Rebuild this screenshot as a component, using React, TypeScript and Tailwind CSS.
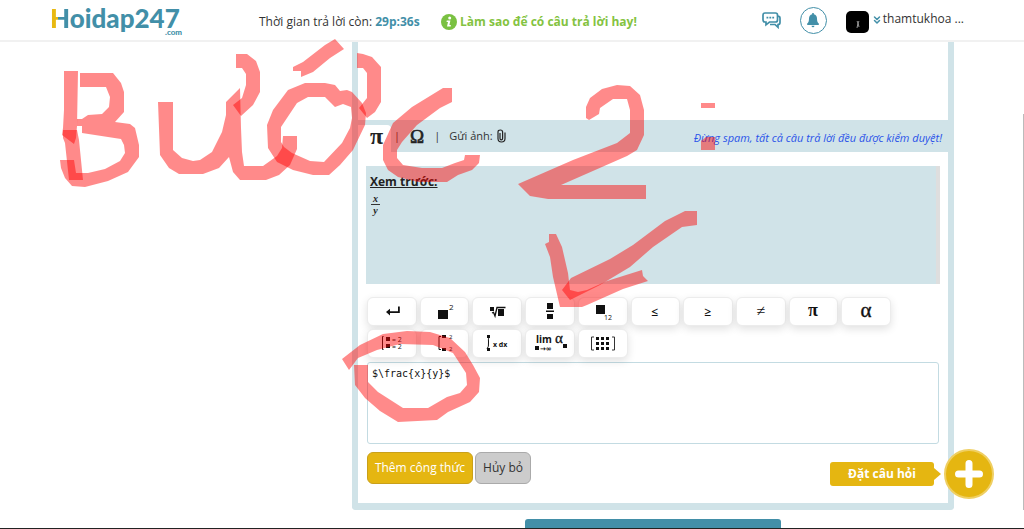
import type { ReactNode } from "react";
import { ChevronsDown } from "lucide-react";

const strokes = [
  "64,71 78,71 77,126 76,138 74,144 62,135 63,128 64,110",
  "63,130 77,130 79,140 83,180 69,180 65,143 63,138",
  "80,73 113,73 121,83 124,92 124,112 115,122 130,124 135,128 139,145 139,157 128,172 108,181 85,187 72,186 65,178 61,168 60,160 74,160 76,173 88,173 105,169 120,161 125,153 124,145 121,139 82,133 82,126 77,126 77,119 82,119 88,115 102,114 109,107 110,97 106,87 80,87",
  "158,102 173,102 173,150 182,158 193,161 200,160 212,152 222,132 226,115 226,102 240,88 241,128 242,152 244,166 263,166 277,156 282,148 283,136 297,136 297,149 290,165 279,175 266,180 240,180 233,172 229,157 219,168 203,174 179,174 169,168 160,155",
  "236,54 247,54 256,61 260,72 260,92 253,105 241,116 233,105 242,98 246,85 246,74 242,68 236,68",
  "293,67 303,62 325,45 335,39 344,49 330,58 313,72 301,77 301,71 293,71",
  "357,53 363,54 372,57 381,67 381,102 375,112 367,118 359,108 367,98 367,73 363,68 357,68",
  "443,88 452,88 452,102 440,108 417,125 402,142 397,150 397,158 403,165 422,168 442,168 455,163 464,160 465,155 480,155 479,163 472,170 458,175 447,182 418,182 398,177 388,170 383,160 383,145 393,123 412,107",
  "586,118 586,107 590,98 602,89 617,85 630,86 640,95 644,110 644,135 637,150 627,156 561,185 646,185 646,199 548,199 530,196 518,184 573,160 617,143 630,133 630,110 627,99 613,99 600,108 599,114 589,120",
  "701,103 715,103 715,108 701,108",
  "701,141 706,137 715,137 715,150 701,150",
  "685,211 697,211 697,225 682,227 653,247 630,267 600,285 582,294 570,300 562,290 571,278 610,259 633,245 665,221",
  "549,234 556,234 562,247 568,273 570,290 578,292 587,290 607,281 642,270 643,276 648,281 623,289 587,305 582,307 560,307 553,277 550,257 545,244 549,242",
  "342,359 360,345 383,334 407,331 430,332 450,338 465,352 473,365 480,378 479,392 470,402 448,412 437,420 398,422 380,411 365,398 355,385 354,365 368,365 368,382 378,392 403,408 428,408 447,397 460,393 467,385 466,373 453,353 433,345 400,344 377,350 358,358 349,370",
];

const ring =
  "M335 85L340 91L347 90L352 92L362 103L366 113L365 125L353 150L340 165L329 175L313 175L293 170L277 162L268 148L267 125L273 110L288 90L305 83L325 83Z M308 97L325 97L335 107L343 104L351 107L352 118L350 128L342 143L324 162L310 161L292 153L284 147L281 142L281 127L297 103Z";

function Annotation() {
  return (
    <svg
      className="pointer-events-none absolute left-0 top-0 z-30"
      width="1024"
      height="529"
      viewBox="0 0 1024 529"
      fill="#ff0000"
      fillOpacity="0.46"
      aria-hidden="true"
    >
      {strokes.map((points) => (
        <polygon key={points} points={points} />
      ))}
      <path d={ring} fillRule="evenodd" />
    </svg>
  );
}

function Key({ label, children }: { label: string; children: ReactNode }) {
  return (
    <button
      type="button"
      aria-label={label}
      className="flex h-[29px] items-center justify-center rounded-md border border-[#ececec] bg-white shadow-[0_3px_8px_rgba(0,0,0,0.12)]"
    >
      <svg className="shrink-0" width="48" height="27" viewBox="0 0 48 27" fill="#111" fontFamily="Open Sans, sans-serif">
        {children}
      </svg>
    </button>
  );
}

function Header() {
  return (
    <header className="relative z-10 flex h-[42px] items-center border-b-2 border-[#f1f1f1] bg-white pl-[50px] pr-[60px]">
      <a href="#" className="relative mb-[4px] w-[209px] font-['Lato'] text-[26px] font-black leading-5 text-[#428fa8]">
        <span className="bg-[linear-gradient(100deg,#e8b912_42%,#428fa8_43%)] bg-clip-text text-transparent">H</span>
        oidap247
        <span className="absolute left-[115px] top-[20px] text-[8px] leading-[8px]">.com</span>
      </a>
      <p className="w-[182px] whitespace-nowrap pt-1">
        Thời gian trả lời còn: <b className="text-[#428fa8]">29p:36s</b>
      </p>
      <a href="#" className="flex items-center gap-[3px] whitespace-nowrap pt-1 font-bold text-[#84c341]">
        <svg width="16" height="16" viewBox="0 0 16 16" aria-hidden="true">
          <circle cx="8" cy="8" r="8" fill="#7ac142" />
          <circle cx="8.7" cy="4" r="1.5" fill="#fff" />
          <path d="M5.8 6.5h3.6L8.4 11h1.4v1.4H6L7 8H5.5z" fill="#fff" />
        </svg>
        Làm sao để có câu trả lời hay!
      </a>
      <div className="ml-auto flex items-center">
        <button type="button" aria-label="Tin nhắn" className="mr-[19px]">
          <svg width="19" height="17" viewBox="0 0 19 17" fill="none" stroke="#428fa8" strokeWidth="1.7" aria-hidden="true">
            <path d="M3 1h10.500q2 0 2 2v5q0 2-2 2H7.500L4 12.800V10H3q-2 0-2-2V3q0-2 2-2z" />
            <path d="M15.500 4.200q2.500 0 2.500 2V10.500q0 2-2 2v2.800l-3-2.800H8" />
            <path d="M4.500 5.700h1.800M7.400 5.700h1.800M10.300 5.700h1.800" strokeWidth="1.800" />
          </svg>
        </button>
        <button
          type="button"
          aria-label="Thông báo"
          className="mr-[19px] flex size-[27px] items-center justify-center rounded-full border border-[#428fa8]"
        >
          <svg width="12" height="15" viewBox="0 0 12 15" fill="#428fa8" aria-hidden="true">
            <path d="M5.200 0h1.600v1.300Q10 2 10 5.500q0 4 1.800 5V12H.2v-1.500Q2 9.500 2 5.500 2 2 5.200 1.300zM4.500 12.700h3Q7.300 14.300 6 14.300t-1.500-1.600z" />
          </svg>
        </button>
        <button type="button" className="flex items-center">
          <svg className="mt-[3px]" width="23" height="22" viewBox="0 0 23 22" aria-hidden="true">
            <rect width="23" height="22" rx="5" fill="#000" />
            <path d="M11 10l1 2-1 5M12 12l1 4M12 12l1-2" stroke="#bbb" strokeWidth="0.8" fill="none" />
          </svg>
          <ChevronsDown className="ml-[2px] size-3 text-[#428fa8]" strokeWidth={3} />
          <span className="mb-[2px] whitespace-nowrap">thamtukhoa ...</span>
        </button>
      </div>
    </header>
  );
}

function Keypad() {
  return (
    <div className="grid max-w-[524px] grid-cols-10 gap-[3px]">
      <Key label="Xuống dòng">
        <path d="M30 8.500h1.800V15H22v2.500l-4-3.400 4-3.300v2.500h8z" />
      </Key>
      <Key label="Số mũ">
        <path d="M17 12h10v9H17z" />
        <text x="28" y="12" fontSize="8">2</text>
      </Key>
      <Key label="Căn bậc n">
        <path d="M17 9h4v4h-4zM25 11h6v7h-6z" />
        <path d="M19 15l1.500-.7L22 18l2-8.500h8.500" fill="none" stroke="#111" strokeWidth="1.3" />
      </Key>
      <Key label="Phân số">
        <path d="M21 5h6v6h-6zM20 12.500h8v1.500h-8zM21 16h6v5h-6z" />
      </Key>
      <Key label="Chỉ số dưới">
        <path d="M17 7h9v9h-9z" />
        <text x="25" y="22" fontSize="7">12</text>
      </Key>
      <Key label="Nhỏ hơn hoặc bằng">
        <text x="24" y="18" fontSize="12" fontWeight="600" textAnchor="middle">≤</text>
      </Key>
      <Key label="Lớn hơn hoặc bằng">
        <text x="24" y="18" fontSize="12" fontWeight="600" textAnchor="middle">≥</text>
      </Key>
      <Key label="Khác">
        <text x="24" y="18" fontSize="16" textAnchor="middle" fontFamily="Liberation Serif, serif">≠</text>
      </Key>
      <Key label="Pi">
        <text x="24" y="18" fontSize="18" fontWeight="700" textAnchor="middle" fontFamily="Liberation Serif, serif">π</text>
      </Key>
      <Key label="Alpha">
        <text x="24" y="19" fontSize="21" textAnchor="middle" fontFamily="Liberation Serif, serif" stroke="#111" strokeWidth="0.4">α</text>
      </Key>
      <Key label="Hệ phương trình hoặc">
        <path d="M15.500 6.500h-1v13h1" fill="none" stroke="#111" />
        <path d="M18 7h4v4h-4zM18 14h4v4h-4z" />
        <text x="24" y="12" fontSize="7">= 2</text>
        <text x="24" y="19" fontSize="7">= 2</text>
      </Key>
      <Key label="Hệ phương trình và">
        <path d="M20 6.500h-2v13h2" fill="none" stroke="#111" />
        <path d="M21 5h4v3h-4zM21 18h4v3h-4z" />
        <text x="28" y="9" fontSize="6">2</text>
        <text x="28" y="21" fontSize="6">2</text>
      </Key>
      <Key label="Tích phân">
        <path d="M14 5h3v3h-3zM14 18h3v3h-3z" />
        <path d="M17 7Q15 7 15.500 12T14 19" fill="none" stroke="#111" />
        <text x="20" y="17" fontSize="7" fontWeight="700">x dx</text>
      </Key>
      <Key label="Giới hạn">
        <text x="10" y="13" fontSize="10" fontWeight="700">lim</text>
        <path d="M9 16h4v4h-4zM37 14h4v4h-4z" />
        <text x="14" y="21" fontSize="7" fontWeight="700" fontFamily="DejaVu Sans, sans-serif">→∞</text>
        <text x="29" y="13" fontSize="15" fontFamily="Liberation Serif, serif" stroke="#111" strokeWidth="0.3">α</text>
      </Key>
      <Key label="Ma trận">
        <path d="M15 7h-2.500v13H15M33 7h2.500v13H33" fill="none" stroke="#333" />
        <path d="M17 7h3v3h-3zM22 7h3v3h-3zM27 7h3v3h-3zM17 12h3v3h-3zM22 12h3v3h-3zM27 12h3v3h-3zM17 17h3v3h-3zM22 17h3v3h-3zM27 17h3v3h-3z" />
      </Key>
    </div>
  );
}

function AskButton() {
  return (
    <div className="absolute right-[30px] top-[449px] z-20 flex items-center">
      <button type="button" className="h-6 w-[104px] rounded-[3px] bg-[#e5b611] font-bold text-white">
        Đặt câu hỏi
      </button>
      <svg width="7" height="12" viewBox="0 0 7 12" fill="#e5b611" aria-hidden="true">
        <path d="M0 0l7 6-7 6z" />
      </svg>
      <button
        type="button"
        aria-label="Thêm"
        className="ml-[3px] flex size-[50px] items-center justify-center rounded-full border-2 border-[#efcf63] bg-[#e5b611]"
      >
        <svg width="28" height="28" viewBox="0 0 28 28" stroke="#fff" strokeWidth="7" strokeLinecap="round" aria-hidden="true">
          <path d="M14 3.500v21M3.500 14h21" />
        </svg>
      </button>
    </div>
  );
}

export default function App() {
  return (
    <div className="relative overflow-hidden bg-white font-['Open_Sans',sans-serif] text-[12px] leading-4 text-[#333]">
      <Header />
      <main className="flex">
        <div className="w-[352px] shrink-0" />
        <section className="min-w-0 flex-1 rounded-b-[4px] border-x-[6px] border-b-[7px] border-[#d0e3e8]">
          <textarea aria-label="Câu hỏi" className="block h-[78px] w-full resize-none bg-white outline-none" />
          <div className="flex h-8 items-center bg-[#d0e3e8] pr-[6px] text-[11px]">
            <button
              type="button"
              aria-label="Công thức"
              className="mr-[3px] h-[27px] w-[33px] self-end rounded-tr-[4px] bg-white pb-[6px] pl-1 font-['Liberation_Serif'] text-[24px] font-bold leading-5 text-[#222]"
            >
              π
            </button>
            <span>|</span>
            <button
              type="button"
              aria-label="Ký tự đặc biệt"
              className="mx-[10px] pt-[2px] font-['Liberation_Serif'] text-[19px] leading-6 text-[#222] [-webkit-text-stroke:0.6px_#222]"
            >
              Ω
            </button>
            <span>|</span>
            <button type="button" className="ml-[9px] flex items-center gap-1 whitespace-nowrap">
              Gửi ảnh:
              <svg width="9" height="14" viewBox="0 0 9 14" fill="none" stroke="#222" strokeWidth="1.2" aria-hidden="true">
                <path d="M3 4v5.500q0 1.300 1.300 1.300t1.300-1.300V3Q5.600 1 3.300 1T1 3v6.500Q1 13 4.500 13T8 9.500V3.500" />
              </svg>
            </button>
            <em className="ml-auto whitespace-nowrap pt-1 text-[#2a53e8]">Đừng spam, tất cả câu trả lời đều được kiểm duyệt!</em>
          </div>
          <div className="px-2 pb-[19px] pt-[14px]">
            <div className="h-[118px] border-r-4 border-[#dedede] bg-[#d0e3e8] px-1 pt-2 text-[#222]">
              <b className="block underline">Xem trước:</b>
              <div className="inline-flex flex-col items-center pl-px font-['Liberation_Serif'] text-[10px] font-bold italic leading-[11px]">
                <span className="border-b border-[#333] px-[2px]">x</span>
                <span>y</span>
              </div>
            </div>
            <div className="pl-px pt-[13px]">
              <Keypad />
              <textarea
                aria-label="Công thức"
                defaultValue="$\frac{x}{y}$"
                className="mt-1 block h-[82px] w-[calc(100%-1px)] resize-none rounded-[3px] border border-[#c3dbe2] bg-white px-1 py-[3px] font-['DejaVu_Sans_Mono',monospace] text-[10px] leading-4 text-[#111] outline-none"
              />
              <div className="mt-2 flex gap-[2px]">
                <button type="button" className="h-8 w-[106px] whitespace-nowrap rounded-md border border-[#c9a01a] bg-[#e5b611] text-white">
                  Thêm công thức
                </button>
                <button type="button" className="h-8 w-[56px] whitespace-nowrap rounded-md border border-[#aaa] bg-[#ccc]">
                  Hủy bỏ
                </button>
              </div>
            </div>
          </div>
        </section>
        <div className="w-[70px] shrink-0 self-stretch pt-[72px]">
          <div className="h-full border-r border-[#bbb]" />
        </div>
      </main>
      <div className="flex justify-center border-b border-[#222] pl-[282px] pt-[9px]">
        <div className="h-[9px] w-[256px] rounded-t-[3px] bg-[#428fa8]" />
      </div>
      <AskButton />
      <Annotation />
    </div>
  );
}
